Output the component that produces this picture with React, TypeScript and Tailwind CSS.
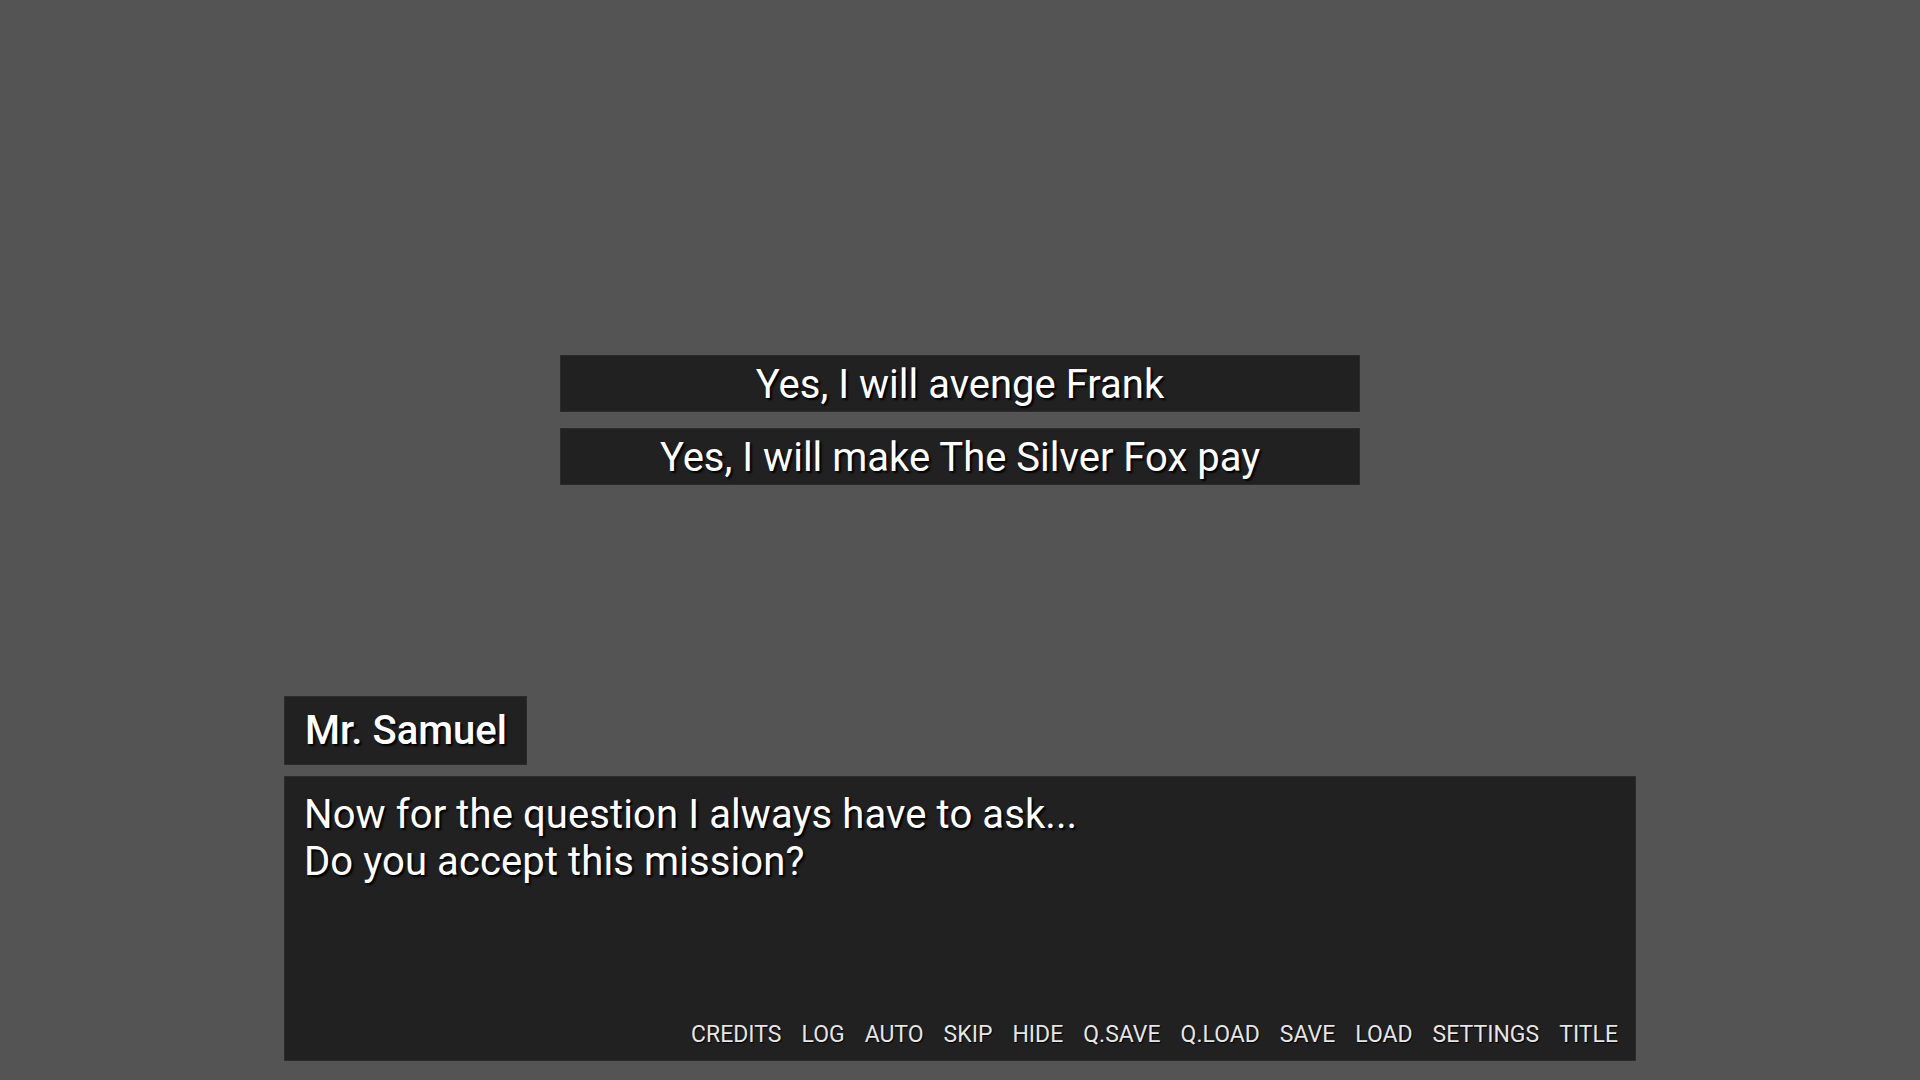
import React from "react";

/* ── Scene data ───────────────────────────────────────────────────────── */
const CHOICES = ["Yes, I will avenge Frank", "Yes, I will make The Silver Fox pay"];
const QUICK_MENU = ["CREDITS", "LOG", "AUTO", "SKIP", "HIDE", "Q.SAVE", "Q.LOAD", "SAVE", "LOAD", "SETTINGS", "TITLE"];

const FONT = "font-['Roboto','Liberation_Sans',sans-serif]";

export default function App() {
  return (
    <div className={`w-[1920px] h-[1080px] bg-[#545454] flex flex-col items-center pt-[355px] ${FONT}`}>
      {/* Choice menu */}
      <div className="w-[800px] flex flex-col gap-[16px]">
        {CHOICES.map((c) => (
          <button
            key={c}
            className="h-[57px] bg-[#212121] border border-[#2b2b2b] flex items-center justify-center text-white text-[40px] leading-none pt-[2px] [text-shadow:2px_2px_2px_#000]"
          >
            {c}
          </button>
        ))}
      </div>

      {/* Say window */}
      <div className="w-[1352px] mt-[211px] flex flex-col">
        <div className="self-start w-[243px] h-[69px] bg-[#212121] border border-[#2b2b2b] flex items-center pl-[20px]">
          <span className="text-white text-[40px] font-medium leading-none [text-shadow:2px_2px_2px_#000]">Mr. Samuel</span>
        </div>

        <div className="mt-[11px] h-[285px] bg-[#212121] border border-[#2b2b2b] flex flex-col pl-[19px] pr-[17px] pt-[14px] pb-[14px]">
          <p className="text-white text-[40px] leading-[47px] tracking-[0.1px] [text-shadow:2px_2px_2px_#000]">
            Now for the question I always have to ask...
            <br />
            Do you accept this mission?
          </p>

          {/* Quick menu */}
          <div className="mt-auto flex justify-end gap-[20px]">
            {QUICK_MENU.map((m) => (
              <span key={m} className="text-[#e6e6e6] text-[23px] leading-none [text-shadow:1px_1px_1px_#000]">
                {m}
              </span>
            ))}
          </div>
        </div>
      </div>
    </div>
  );
}
